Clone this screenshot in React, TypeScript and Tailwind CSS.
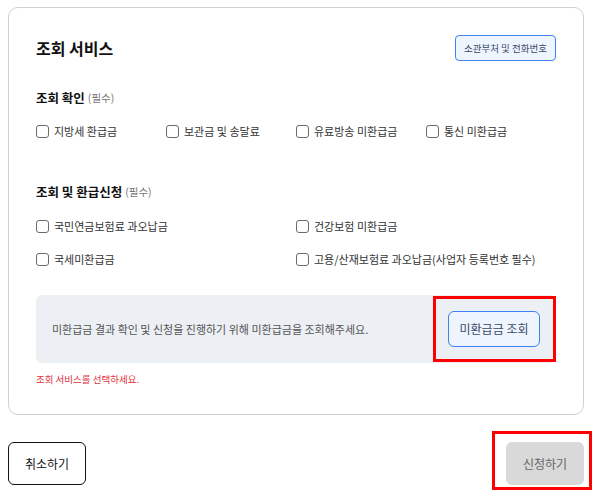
import React from "react";

const font = { fontFamily: '"Noto Sans CJK KR", "Noto Sans", sans-serif' };

function Check({ label }: { label: string }) {
  return (
    <label className="flex items-center gap-[5px] h-[20px] text-[11px] text-[#333]">
      <span className="w-[13px] h-[13px] rounded-[3px] border border-[#6b6b6b] bg-white shrink-0" />
      <span>{label}</span>
    </label>
  );
}

export default function App() {
  return (
    <div style={font} className="relative w-[593px] h-[490px] bg-white pl-[8px] pt-[7px]">
      <div className="w-[576px] rounded-[10px] border border-[#cfcfcf] px-[27px] pt-[27px] pb-[27px]">
        <div className="flex items-center justify-between h-[26px]">
          <h2 className="text-[16px] font-bold text-[#111] leading-[24px]">조회 서비스</h2>
          <button className="w-[101px] h-[26px] rounded-[4px] border border-[#3b82f6] bg-[#eef5ff] text-[9.5px] text-[#3a4a66]">
            소관부처 및 전화번호
          </button>
        </div>

        <div className="mt-[27px] h-[20px] flex items-center gap-[3px]">
          <span className="text-[12.5px] font-bold text-[#111]">조회 확인</span>
          <span className="text-[10.5px] text-[#777]">(필수)</span>
        </div>
        <div className="mt-[13px] grid grid-cols-4">
          <Check label="지방세 환급금" />
          <Check label="보관금 및 송달료" />
          <Check label="유료방송 미환급금" />
          <Check label="통신 미환급금" />
        </div>

        <div className="mt-[41px] h-[20px] flex items-center gap-[3px]">
          <span className="text-[12.5px] font-bold text-[#111]">조회 및 환급신청</span>
          <span className="text-[10.5px] text-[#777]">(필수)</span>
        </div>
        <div className="mt-[14px] grid grid-cols-2 gap-y-[13px]">
          <Check label="국민연금보험료 과오납금" />
          <Check label="건강보험 미환급금" />
          <Check label="국세미환급금" />
          <Check label="고용/산재보험료 과오납금(사업자 등록번호 필수)" />
        </div>

        <div className="mt-[26px] h-[68px] rounded-[6px] bg-[#eceff4] flex items-center justify-between pl-[16px] pr-[16px]">
          <span className="text-[11px] text-[#555]">
            미환급금 결과 확인 및 신청을 진행하기 위해 미환급금을 조회해주세요.
          </span>
          <button className="w-[92px] h-[36px] rounded-[6px] border border-[#3b82f6] bg-[#eef5ff] text-[12px] text-[#3a4a66]">
            미환급금 조회
          </button>
        </div>

        <p className="mt-[9px] text-[9.5px] leading-[15px] text-[#e0323a]">조회 서비스를 선택하세요.</p>
      </div>

      <div className="mt-[27px] flex justify-between w-[576px]">
        <button className="w-[78px] h-[43px] rounded-[6px] border border-[#111] bg-white text-[12px] text-[#111]">
          취소하기
        </button>
        <button className="w-[78px] h-[43px] rounded-[6px] bg-[#d9d9d9] text-[12px] text-[#666]">
          신청하기
        </button>
      </div>

      <div className="absolute left-[433px] top-[296px] w-[123px] h-[66px] border-[3px] border-[#ff0000] pointer-events-none" />
      <div className="absolute left-[492px] top-[431px] w-[100px] h-[59px] border-[3px] border-[#ff0000] pointer-events-none" />
    </div>
  );
}
